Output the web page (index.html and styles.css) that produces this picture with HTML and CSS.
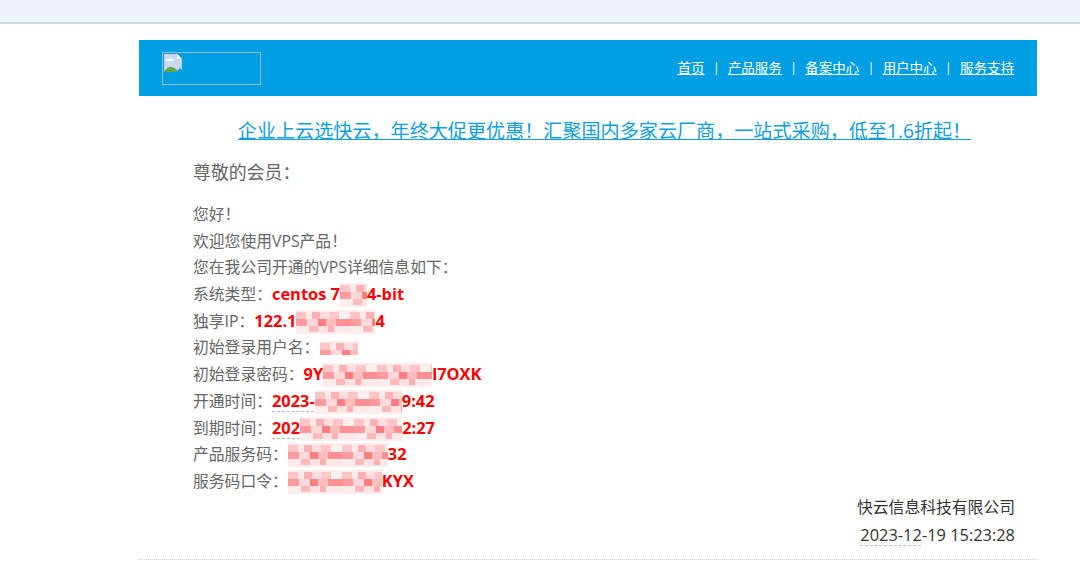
FILE: index.html
```html
<!DOCTYPE html>
<html lang="zh-CN">
<head>
<meta charset="utf-8">
<title>VPS 开通信息</title>
<link rel="stylesheet" href="styles.css">
</head>
<body>
<div class="topbar"></div>
<main class="mail">
  <header class="banner">
    <div class="logo">
      <svg class="broken" viewBox="0 0 18 19" width="18" height="19">
        <path d="M0 0H13L18 5V16L16 14L13 17H0Z" fill="#c9d8f2"/>
        <path d="M13 0V5H18Z" fill="#fff"/>
        <path d="M2 7a2 2 0 0 1 3-2a3 3 0 0 1 5 2z" fill="#fff"/>
        <path d="M0 18C3 12 10 11 14 18Z" fill="#5da83f"/>
      </svg>
    </div>
    <nav class="nav">
      <a href="#">首页</a><span class="sep">|</span>
      <a href="#">产品服务</a><span class="sep">|</span>
      <a href="#">备案中心</a><span class="sep">|</span>
      <a href="#">用户中心</a><span class="sep">|</span>
      <a href="#">服务支持</a>
    </nav>
  </header>
  <p class="promo"><a href="#">企业上云选快云，年终大促更优惠！汇聚国内多家云厂商，一站式采购，低至1.6折起！</a></p>
  <section class="content">
    <h1 class="greet">尊敬的会员：</h1>
    <div class="lines">
      <p>您好！</p>
      <p>欢迎您使用VPS产品！</p>
      <p>您在我公司开通的VPS详细信息如下：</p>
      <p>系统类型：<b>centos 7<i class="m m1"></i>4-bit</b></p>
      <p>独享IP：<b>122.1<i class="m m2"></i>4</b></p>
      <p>初始登录用户名：<b><i class="m m3"></i></b></p>
      <p>初始登录密码：<b>9Y<i class="m m4"></i>l7OXK</b></p>
      <p>开通时间：<b><span class="date">2023-</span><i class="m m5"></i>9:42</b></p>
      <p>到期时间：<b><span class="date">202</span><i class="m m6"></i>2:27</b></p>
      <p>产品服务码：<i class="m m7"></i><b>32</b></p>
      <p>服务码口令：<i class="m m8"></i><b>KYX</b></p>
    </div>
  </section>
  <footer class="sign">
    <p>快云信息科技有限公司</p>
    <p class="stamp"><span class="date">2023-12</span>-19 15:23:28</p>
  </footer>
</main>
</body>
</html>
```
FILE: styles.css
```css
html, body { margin: 0; padding: 0; background: #fff; overflow: hidden; }
body { height: 566px; font-family: "Open Sans", "Noto Sans CJK SC", sans-serif; color: #666; }
p, h1 { margin: 0; font-weight: normal; }
.topbar { height: 22px; background: #eff3fc; border-bottom: 2px solid #cbd7e9; }
.mail { width: 898px; margin: 16px 0 0 139px; height: 519px; border-bottom: 1px dotted #ccc; }
.banner { height: 56px; background: #009fe3; display: flex; align-items: center; justify-content: space-between; padding: 0 23px 0 23px; }
.logo { width: 96px; height: 30px; border: 1px solid #9db6c4; padding: 1px 0 0 1px; margin-top: 1px; }
.broken { display: block; }
.nav { display: flex; align-items: center; font-size: 13.5px; color: #fff; padding-bottom: 2px; }
.nav a { color: #fff; text-decoration: underline; }
.sep { margin: 0 8.4px; font-size: 12px; }
.promo { text-align: center; font-size: 19.1px; line-height: 30px; margin-top: 20px; padding-left: 33px; }
.promo a { color: #0f9ee0; text-decoration: underline; }
.content { padding-left: 54px; }
.greet { font-size: 17.9px; line-height: 28px; margin-top: 12px; color: #666; }
.lines { margin-top: 15px; font-size: 15.8px; line-height: 26.7px; }
.lines p { white-space: nowrap; height: 26.7px; }
.lines b { color: #f00; font-weight: 700; font-size: 16.4px; }
.date { text-decoration: underline dashed #bbb 1px; text-underline-offset: 4px; }
.m { display: inline-block; height: 24px; vertical-align: -7px; font-style: normal;
  background-color: rgba(255, 225, 225, .6);
  background-image:
    linear-gradient(90deg, #ffc4c6 0 18%, #ffe9e9 18% 30%, #ffb0b3 30% 44%, #ffdcdd 44% 62%, #ffc4c6 62% 80%, #fff0f0 80% 100%),
    linear-gradient(90deg, #ff9a9e 0 20%, #ffd8d9 20% 40%, #ff7c81 40% 55%, #ffbcbe 55% 75%, #ff8f93 75% 100%),
    linear-gradient(90deg, #ffecec 0 25%, #ffb9bb 25% 40%, #ffe1e2 40% 60%, #ffafb2 60% 70%, #ffe8e8 70% 100%);
  background-size: 54px 7px, 54px 7px, 54px 6px;
  background-position: 0 2px, 0 9px, 0 16px;
  background-repeat: repeat-x; }
.m1 { width: 27px; }
.m2 { width: 79px; }
.m3 { width: 38px; height: 14px; vertical-align: -2px; margin-left: 1px; }
.m4 { width: 109px; }
.m5 { width: 87px; }
.m6 { width: 102px; }
.m7 { width: 100px; }
.m8 { width: 94px; }
.sign { text-align: right; padding-right: 22px; margin-top: -1.5px; font-size: 15.8px; line-height: 28px; color: #333; }
.stamp { font-size: 16.4px; }
```
